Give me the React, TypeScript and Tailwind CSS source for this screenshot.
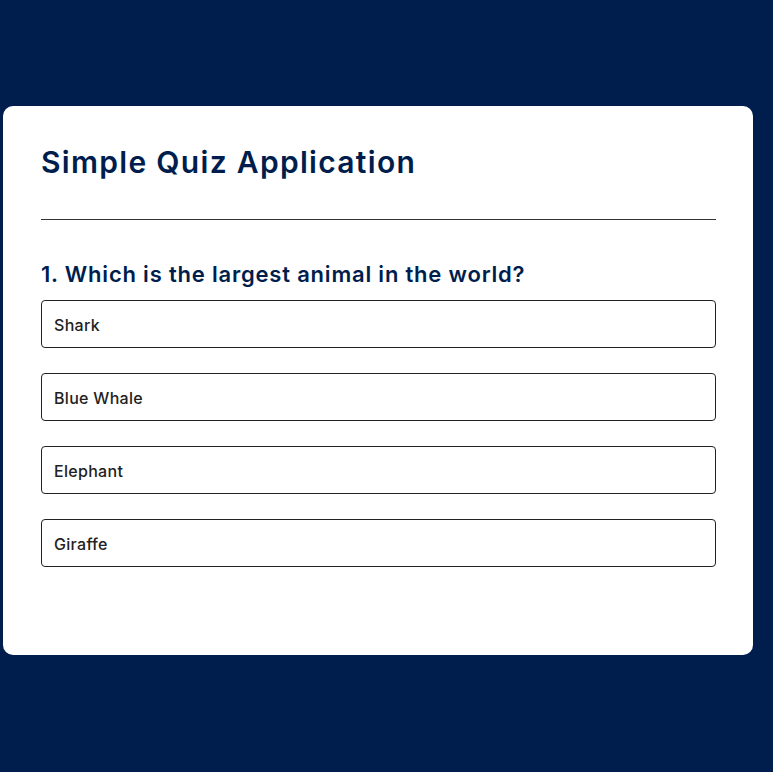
import React from 'react';

const answers = ['Shark', 'Blue Whale', 'Elephant', 'Giraffe'];

export default function App() {
  return (
    <div className="min-h-[772px] bg-[#001e4d] pt-[106px] pb-[117px]" style={{ fontFamily: 'Inter, "Noto Sans", sans-serif' }}>
      <div className="ml-[3px] w-[750px] h-[549px] bg-white rounded-[10px] pl-[38px] pr-[37px] pt-[38px]">
        <h1 className="text-[30px] leading-[36px] font-semibold text-[#001e4d] tracking-[1.3px]">Simple Quiz Application</h1>
        <div className="mt-[39px] border-t border-[#333]" />
        <h2 className="mt-[40px] text-[22px] leading-[28px] font-semibold text-[#001e4d] tracking-[0.8px]">
          1. Which is the largest animal in the world?
        </h2>
        <div className="mt-[12px] flex flex-col gap-[25px]">
          {answers.map((a) => (
            <button
              key={a}
              className="h-[48px] w-full text-left px-[12px] pt-[2px] border border-[#222] rounded-[4px] text-[16px] font-medium text-[#222] bg-white tracking-[0.3px]"
            >
              {a}
            </button>
          ))}
        </div>
      </div>
    </div>
  );
}
